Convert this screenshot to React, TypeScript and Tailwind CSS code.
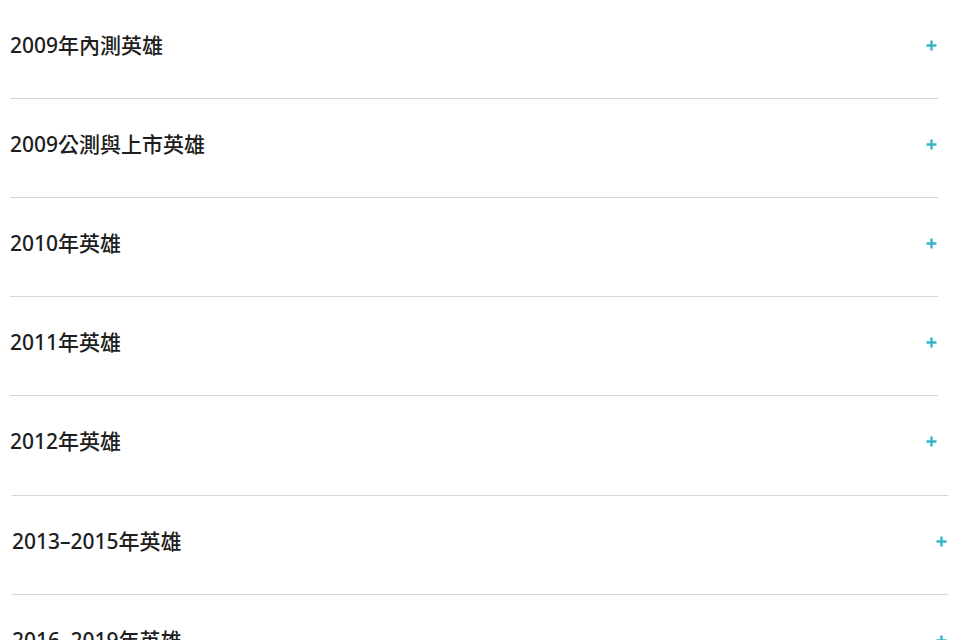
import React from 'react';

const first = ['2009年內測英雄', '2009公測與上市英雄', '2010年英雄', '2011年英雄', '2012年英雄'];
const second = ['2013–2015年英雄', '2016–2019年英雄'];

function Plus() {
  return (
    <svg width="13" height="13" viewBox="0 0 13 13" className="shrink-0">
      <path d="M6.5 1.5v10M1.5 6.5h10" stroke="#36b4c8" strokeWidth="2.4" />
    </svg>
  );
}

function Row({ label, last }: { label: string; last?: boolean }) {
  return (
    <div
      className={
        'flex h-[99px] items-center justify-between pb-[8px] ' +
        (last ? '' : 'border-b border-[#d6d6d6]')
      }
    >
      <span className="text-[21px] font-medium leading-none text-[#1e1e1e]">{label}</span>
      <span>
        <Plus />
      </span>
    </div>
  );
}

export default function App() {
  return (
    <div
      className="h-[640px] w-[966px] overflow-hidden bg-white"
      style={{ fontFamily: '"Noto Sans", "Noto Sans CJK TC", sans-serif' }}
    >
      <div className="ml-[10px] w-[928px]">
        {first.map((label, i) => (
          <Row key={label} label={label} last={i === first.length - 1} />
        ))}
      </div>
      <div className="ml-[12px] w-[936px] border-t border-[#d6d6d6]">
        {second.map((label) => (
          <Row key={label} label={label} />
        ))}
      </div>
    </div>
  );
}
